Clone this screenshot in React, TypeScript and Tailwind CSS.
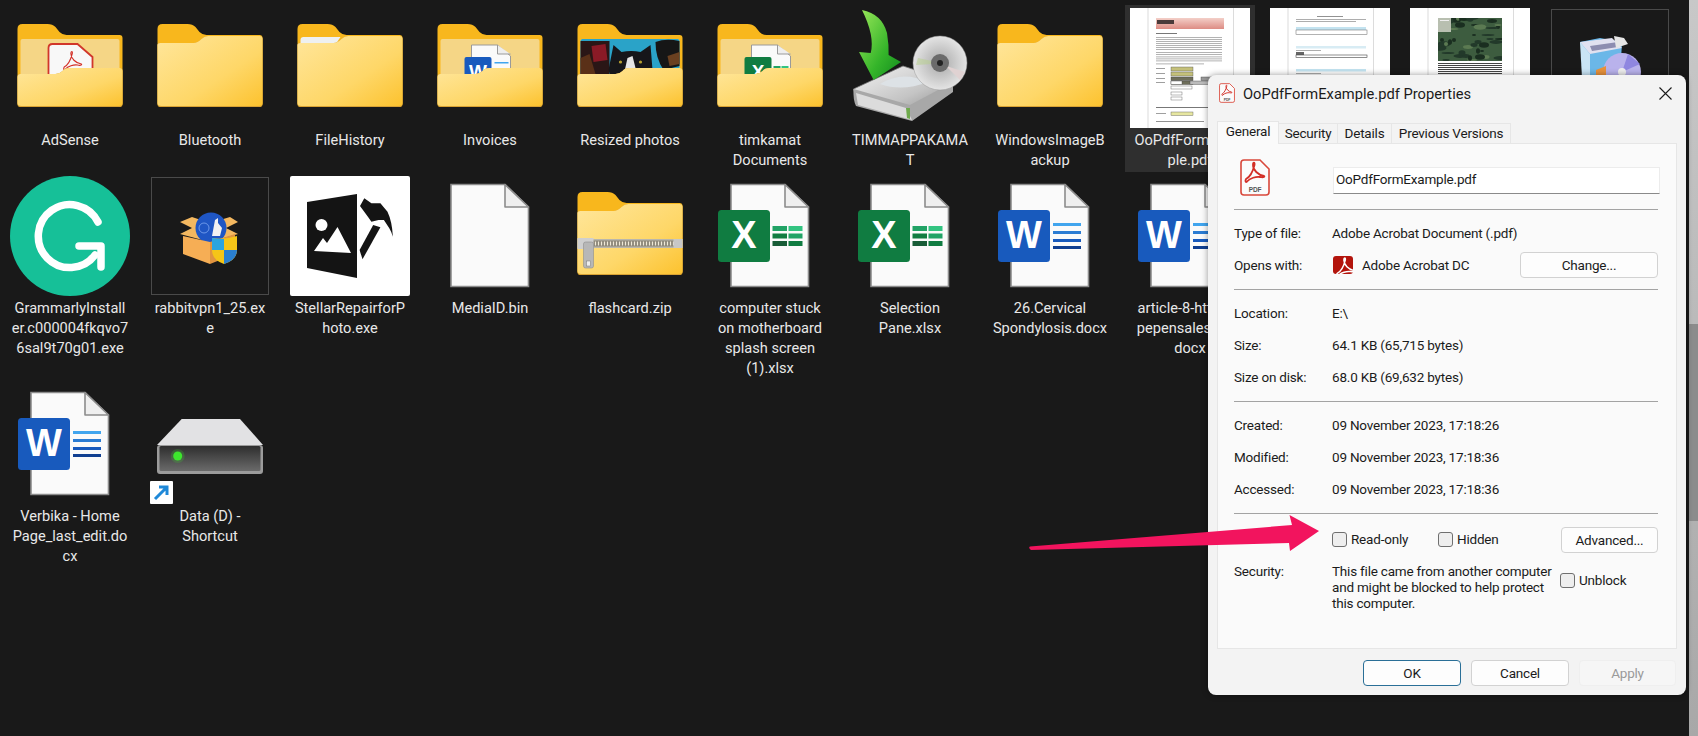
import React from "react";

const FONT = "font-['Roboto','Noto_Sans',sans-serif]";

const Line = ({ x, y, w, h = 1, c = "#555" }: { x: number; y: number; w: number; h?: number; c?: string }) => (
  <rect x={x} y={y} width={w} height={h} fill={c} />
);

const Defs = () => (
  <svg className="absolute w-0 h-0" aria-hidden="true">
    <defs>
      <linearGradient id="folderFront" x1="0" y1="0" x2="1" y2="1">
        <stop offset="0" stopColor="#ffe69b" />
        <stop offset="0.6" stopColor="#fed768" />
        <stop offset="1" stopColor="#fcc22e" />
      </linearGradient>
      <linearGradient id="driveFace" x1="0" y1="0" x2="0" y2="1">
        <stop offset="0" stopColor="#2e2e2e" />
        <stop offset="1" stopColor="#6a6a6a" />
      </linearGradient>
      <linearGradient id="arrowGreen" x1="0" y1="0" x2="1" y2="1">
        <stop offset="0" stopColor="#9be85a" />
        <stop offset="0.6" stopColor="#35b52a" />
        <stop offset="1" stopColor="#118a1d" />
      </linearGradient>
      <linearGradient id="hddSilver" x1="0" y1="0" x2="1" y2="1">
        <stop offset="0" stopColor="#f4f4f4" />
        <stop offset="0.6" stopColor="#c4c4c4" />
        <stop offset="1" stopColor="#8a8a8a" />
      </linearGradient>
      <radialGradient id="disc" cx="0.5" cy="0.5" r="0.5">
        <stop offset="0" stopColor="#888" />
        <stop offset="0.35" stopColor="#bdbdbd" />
        <stop offset="1" stopColor="#e4e4e4" />
      </radialGradient>
      <linearGradient id="thumbBand" x1="0" y1="0" x2="0" y2="1">
        <stop offset="0" stopColor="#f3cfc8" />
        <stop offset="1" stopColor="#dd8c84" />
      </linearGradient>
    </defs>
  </svg>
);

const Box = ({ children }: { children?: React.ReactNode }) => (
  <svg width="120" height="120" viewBox="0 0 120 120" className="block">
    {children}
  </svg>
);

const FolderBack = () => (
  <path d="M0 5Q0 0 5 0H30Q35 0 38 3L42 8Q45 11 49 11H102Q105 11 105 14V80Q105 83 102 83H3Q0 83 0 80Z" fill="#f8b71d" />
);
const FrontPlain = () => (
  <>
    <path d="M0 21Q0 19 3 19H36Q40 19 44 15Q47 12 51 12H102Q105 12 105 15V80Q105 83 101 83H4Q0 83 0 80Z" fill="#d9a233" />
    <path d="M0 21Q0 19 3 19H36Q40 19 44 15Q47 12 51 12H102Q105 12 105 15V79Q105 82 101 82H4Q0 82 0 79Z" fill="url(#folderFront)" />
  </>
);
const FrontOpen = () => (
  <>
    <path d="M0 53Q0 50 3 50H38Q42 50 45 47Q47 44 52 44H102Q105 44 105 47V80Q105 83 101 83H4Q0 83 0 80Z" fill="#d9a233" />
    <path d="M0 53Q0 50 3 50H38Q42 50 45 47Q47 44 52 44H102Q105 44 105 47V79Q105 82 101 82H4Q0 82 0 79Z" fill="url(#folderFront)" />
  </>
);

const Folder = ({ extra }: { extra?: React.ReactNode }) => (
  <Box>
    <g transform="translate(7.5 16)">
      <FolderBack />
      {extra}
      <FrontPlain />
    </g>
  </Box>
);

const OpenFolder = ({ inner }: { inner?: React.ReactNode }) => (
  <Box>
    <g transform="translate(7.5 16)">
      <FolderBack />
      <rect x="3" y="15" width="99" height="40" rx="2" fill="#f5d686" />
      {inner}
      <FrontOpen />
    </g>
  </Box>
);

const MiniPage = () => (
  <path d="M34 21H60L73 32V60H34Z" fill="#fafafa" stroke="#9a9a9a" strokeWidth="1" />
);

const FileBase = () => (
  <>
    <path d="M21 8.5H75L98.5 31V110.500H21Z" fill="#fafafa" stroke="#8c8c8c" strokeWidth="1.600" />
    <path d="M75 8.500V31H98.500Z" fill="#efefef" stroke="#8c8c8c" strokeWidth="1.600" strokeLinejoin="round" />
  </>
);

const Badge = ({ c, t }: { c: string; t: string }) => (
  <>
    <rect x="8" y="34" width="52" height="52" rx="3.500" fill={c} />
    <text x="34" y="72" textAnchor="middle" fontFamily="'Liberation Sans',sans-serif" fontWeight="700" fontSize="38" fill="#fff">
      {t}
    </text>
  </>
);

const WordIcon = () => (
  <Box>
    <FileBase />
    <Line x={63} y={47} w={28} h={3} c="#41a5ee" />
    <Line x={63} y={55} w={28} h={3} c="#2b7cd3" />
    <Line x={63} y={63} w={28} h={3} c="#185abd" />
    <Line x={63} y={70} w={28} h={3} c="#103f91" />
    <Badge c="#185abd" t="W" />
  </Box>
);

const ExcelIcon = () => (
  <Box>
    <FileBase />
    <Line x={62.500} y={50} w={14.500} h={5} c="#21a366" />
    <Line x={78.500} y={50} w={14} h={5} c="#33c481" />
    <Line x={62.500} y={57.500} w={14.500} h={5} c="#107c41" />
    <Line x={78.500} y={57.500} w={14} h={5} c="#21a366" />
    <Line x={62.500} y={65} w={14.500} h={5} c="#185c37" />
    <Line x={78.500} y={65} w={14} h={5} c="#107c41" />
    <Badge c="#107c41" t="X" />
  </Box>
);

const Swirl = ({ c = "#d32f27", w = 2 }: { c?: string; w?: number }) => (
  <path
    d="M6 22C10 20 13 14 14.500 8C15 5 13 5 13 8C13 13 18 18 24 19C25 19.500 24 21 20 20C16 19.500 10 21 7 24.500C5.500 26 5 24 6 22Z"
    fill="none"
    stroke={c}
    strokeWidth={w}
    strokeLinejoin="round"
  />
);

const PdfIcon = ({ className }: { className: string }) => (
  <svg viewBox="0 0 30 37" className={className}>
    <path d="M4 1H20L29 10V33Q29 36 26 36H4Q1 36 1 33V4Q1 1 4 1Z" fill="#fbfbfb" stroke="#d9483b" strokeWidth="1.600" />
    <g transform="translate(0 -2) scale(1)">
      <Swirl w={1.800} />
    </g>
    <text x="15" y="33" textAnchor="middle" fontFamily="'Liberation Sans',sans-serif" fontWeight="700" fontSize="6.500" fill="#555">
      PDF
    </text>
  </svg>
);

const AdSenseIcon = () => (
  <OpenFolder
    inner={
      <>
        <path d="M35 20H60L75 33V60H31V24Q31 20 35 20Z" fill="#f8f8f8" stroke="#d1372b" strokeWidth="1.800" />
        <g transform="translate(41 22) scale(0.950)">
          <Swirl w={1.200} />
        </g>
      </>
    }
  />
);

const InvoicesIcon = () => (
  <OpenFolder
    inner={
      <>
        <MiniPage />
        <path d="M60 21V30H73" fill="#eee" stroke="#9a9a9a" />
        <rect x="27" y="33" width="27" height="27" rx="2" fill="#185abd" />
        <text x="40.500" y="54" textAnchor="middle" fontFamily="'Liberation Sans',sans-serif" fontWeight="700" fontSize="19" fill="#fff">
          W
        </text>
        <Line x={57} y={38} w={14} h={1.500} c="#41a5ee" />
      </>
    }
  />
);

const TimkamatIcon = () => (
  <OpenFolder
    inner={
      <>
        <MiniPage />
        <path d="M60 21V30H73" fill="#eee" stroke="#9a9a9a" />
        <rect x="27" y="33" width="27" height="27" rx="2" fill="#107c41" />
        <text x="40.500" y="54" textAnchor="middle" fontFamily="'Liberation Sans',sans-serif" fontWeight="700" fontSize="19" fill="#fff">
          X
        </text>
        <Line x={56} y={42} w={7} h={3} c="#21a366" />
        <Line x={64} y={42} w={7} h={3} c="#33c481" />
      </>
    }
  />
);

const PhotoIcon = () => (
  <OpenFolder
    inner={
      <>
        <rect x="3" y="15" width="99" height="40" rx="2" fill="#2aa3c8" />
        <path d="M3 17H32V55H3Z" fill="#2a1616" />
        <path d="M14 22L28 20L30 36L16 38Z" fill="#8a1a26" />
        <path d="M3 34L12 30L18 50H3Z" fill="#5a3018" />
        <path d="M78 18Q88 14 102 17V42L86 46Q78 34 78 18Z" fill="#161616" />
        <path d="M90 32L102 28V40L92 42Z" fill="#6a4020" />
        <path d="M31 46L36 21L44 28Q54 26 63 28L73 21L75 46L70 55H34Z" fill="#16161a" />
        <path d="M50 34L55 32L60 52H46Z" fill="#e6e6e6" />
        <circle cx="43" cy="38" r="1.600" fill="#b8a030" />
        <circle cx="63" cy="38" r="1.600" fill="#b8a030" />
      </>
    }
  />
);

const ZipIcon = () => (
  <Box>
    <g transform="translate(7.500 16)">
      <FolderBack />
      <FrontPlain />
      <rect x="0" y="47" width="105" height="9" fill="#b9b6ac" />
      <rect x="14" y="48.500" width="90" height="6" fill="#8a8578" />
      <path
        d="M15 49.500V53.500M18 49.500V53.500M21 49.500V53.500M24 49.500V53.500M27 49.500V53.500M30 49.500V53.500M33 49.500V53.500M36 49.500V53.500M39 49.500V53.500M42 49.500V53.500M45 49.500V53.500M48 49.500V53.500M51 49.500V53.500M54 49.500V53.500M57 49.500V53.500M60 49.500V53.500M63 49.500V53.500M66 49.500V53.500M69 49.500V53.500M72 49.500V53.500M75 49.500V53.500M78 49.500V53.500M81 49.500V53.500M84 49.500V53.500M87 49.500V53.500M90 49.500V53.500M93 49.500V53.500M96 49.500V53.500"
        stroke="#f0ead8"
        strokeWidth="1.200"
      />
      <rect x="96" y="47" width="9" height="9" fill="#c7c7c7" />
      <rect x="0" y="46" width="16" height="11" fill="#cfcfcf" />
      <rect x="6" y="50" width="10" height="26" rx="2" fill="#b7b7b7" stroke="#8f8f8f" strokeWidth="0.600" />
      <rect x="9" y="69" width="4" height="5" fill="#eee" stroke="#777" strokeWidth="0.500" />
    </g>
  </Box>
);

const GrammarlyIcon = () => (
  <Box>
    <circle cx="60" cy="60" r="60" fill="#16c098" />
    <g fill="none" stroke="#fff" strokeWidth="7.500" strokeLinecap="round" strokeLinejoin="round">
      <path d="M88 46A31.500 31.500 0 1 0 85 79" />
      <path d="M69 70H91V91" />
    </g>
  </Box>
);

const RabbitIcon = () => (
  <Box>
    <rect x="1.500" y="1.500" width="117" height="117" fill="#191919" stroke="#4a4a4a" strokeWidth="1" />
    <path d="M30 46L42 41L60 47L80 41L88 46L76 52L88 58L60 66L30 58L42 52Z" fill="#f4b860" />
    <circle cx="61" cy="52" r="15.500" fill="#1f56c4" />
    <path d="M62 60L65 44L68 42L68 47L72 52L70 60Z" fill="#f2f2f2" />
    <circle cx="54" cy="52" r="5" fill="none" stroke="#7ea6f0" strokeWidth="0.800" />
    <path d="M33 60L60 66V88L33 78Z" fill="#f6ae55" />
    <path d="M60 66L85 58V78L60 88Z" fill="#e09440" />
    <path d="M62 62Q74 64 87 60V74Q87 84 74 88Q62 84 62 74Z" fill="#f5c518" />
    <path d="M62 62Q68 63 74 63V74H62Z" fill="#2aa4e0" />
    <path d="M74 74H87Q87 84 74 88Z" fill="#2a7fd0" />
  </Box>
);

const StellarIcon = () => (
  <Box>
    <rect width="120" height="120" rx="2" fill="#fff" />
    <path d="M17 26L67 18V102L17 92Z" fill="#141414" />
    <circle cx="31.500" cy="49" r="6" fill="#fff" />
    <path d="M24 75L33 62L37 67L47.500 51L61 77Z" fill="#fff" />
    <path d="M83.200 49L90.400 51.300L72.500 83.300L69.600 74Z" fill="#141414" />
    <path d="M70 30L74.300 22.300L81.400 27.300H90.400L97.500 35.700Q102 45 102.900 60.700Q101 55 99.300 52.300L93.900 44H88.600L81.400 45.700L77.900 40.700Z" fill="#141414" />
  </Box>
);

const DiscIcon = () => (
  <Box>
    <path d="M3.500 81L53 58L103 74L62 104L6 91Z" fill="url(#hddSilver)" stroke="#777" strokeWidth="0.800" />
    <path d="M3.500 81L60 97L103 74V84L62 113L6 98Q3 92 3.500 81Z" fill="#a8a8a8" />
    <path d="M6 85L56 100L62 112L8 97Z" fill="#dcdcdc" />
    <path d="M56 100L60 100V111L57 110Z" fill="#6faa4d" />
    <path d="M30 76Q52 62 78 74Q52 84 30 76Z" fill="#dde2e6" />
    <circle cx="90" cy="55" r="27" fill="url(#disc)" stroke="#9a9a9a" strokeWidth="0.500" />
    <path d="M68 50L82 53L82 56L66 57Z" fill="#b6d08a" opacity="0.500" />
    <path d="M96 58L115 64L110 72Z" fill="#e0d2d2" />
    <circle cx="90" cy="55" r="9" fill="#6b6b6b" />
    <circle cx="90" cy="55" r="3" fill="#222" />
    <path d="M12 2Q32 6 37 25Q39 37 38.600 47L51 54L23.600 72L9 44L20.700 45Q25 28 12 2Z" fill="url(#arrowGreen)" />
  </Box>
);

const DriveShortcut = () => (
  <Box>
    <path d="M31.700 35H90L113 61H7Z" fill="#e2e2e4" />
    <rect x="7" y="61" width="106" height="29" rx="3" fill="#9b9b9b" />
    <rect x="9.500" y="62" width="101" height="25" rx="1.500" fill="url(#driveFace)" />
    <circle cx="27.700" cy="72" r="4.500" fill="#3ee62e" />
    <circle cx="27.700" cy="72" r="7" fill="#3ee62e" opacity="0.200" />
    <rect x="0" y="97" width="23" height="23" rx="1" fill="#fff" />
    <path d="M5 115L16 104M9 103H17V111" fill="none" stroke="#1e88d8" strokeWidth="3" />
  </Box>
);

const ThumbPage = ({ children }: { children: React.ReactNode }) => (
  <Box>
    <rect width="120" height="120" fill="#fff" />
    <Line x={17.500} y={0} w={1} h={120} c="#dcdcdc" />
    <Line x={103} y={0} w={1} h={120} c="#dcdcdc" />
    {children}
  </Box>
);

const Thumb1 = () => (
  <ThumbPage>
    <rect x="26" y="10" width="68" height="11" fill="url(#thumbBand)" />
    <Line x={27} y={12} w={17} h={4} c="#4a3a3a" />
    <Line x={26} y={25} w={21} h={1} c="#777" />
    {[29, 31, 33, 35, 37, 39, 41].map((y) => (
      <Line key={y} x={26} y={y} w={66} h={0.800} c="#a0a0a0" />
    ))}
    {[44, 46, 48.500, 50.500, 52.500, 55.500].map((y) => (
      <Line key={y} x={26} y={y} w={y === 55.500 ? 48 : 66} h={0.800} c="#a0a0a0" />
    ))}
    {[59, 64].map((y) => (
      <React.Fragment key={y}>
        <Line x={26} y={y + 1} w={9} h={0.800} c="#888" />
        <rect x="41" y={y} width="22" height="4" fill="#c4c07a" stroke="#555" strokeWidth="0.400" />
      </React.Fragment>
    ))}
    {[69, 73].map((y) => (
      <React.Fragment key={y}>
        <Line x={26} y={y + 1} w={9} h={0.800} c="#888" />
        <rect x="41" y={y} width="22" height="3.500" fill="#6e6e5a" stroke="#444" strokeWidth="0.400" />
      </React.Fragment>
    ))}
    <rect x="71" y="69" width="11" height="3.500" fill="#999" stroke="#444" strokeWidth="0.400" />
    <rect x="41" y="73" width="11" height="3.500" fill="#fff" stroke="#444" strokeWidth="0.400" />
    <rect x="60" y="73" width="30" height="3.500" fill="#bbb" stroke="#444" strokeWidth="0.400" />
    <rect x="41" y="78" width="21" height="3" fill="#fff" stroke="#555" strokeWidth="0.400" />
    <rect x="41" y="84" width="11" height="3" fill="#fff" stroke="#555" strokeWidth="0.400" />
    <rect x="41" y="89" width="11" height="3" fill="#fff" stroke="#555" strokeWidth="0.400" />
    <Line x={26} y={99} w={66} h={1} c="#777" />
    <rect x="41" y="104" width="22" height="3.500" fill="#e6e6a0" stroke="#555" strokeWidth="0.400" />
    <Line x={26} y={105} w={10} h={0.800} c="#888" />
    <Line x={26} y={113} w={48} h={0.800} c="#777" />
  </ThumbPage>
);

const Thumb2 = () => (
  <ThumbPage>
    <Line x={47} y={8} w={26} h={0.800} c="#777" />
    <Line x={26} y={11} w={70} h={0.800} c="#999" />
    <Line x={26} y={13} w={60} h={0.800} c="#999" />
    <Line x={26} y={19} w={70} h={3} c="#c3e3f0" />
    <rect x="26" y="22" width="71" height="4.500" fill="#fff" stroke="#666" strokeWidth="0.500" />
    <Line x={26} y={38} w={70} h={2.500} c="#d8ecf4" />
    <Line x={26} y={42} w={25} h={0.800} c="#999" />
    <rect x="26" y="44" width="8" height="3" fill="#666" />
    <rect x="26" y="47" width="71" height="2.500" fill="#fff" stroke="#444" strokeWidth="0.600" />
    <Line x={26} y={61} w={70} h={2.500} c="#c3e3f0" />
    <Line x={26} y={65} w={25} h={0.800} c="#999" />
  </ThumbPage>
);

const mapSpots = Array.from({ length: 46 }, (_, i) => ({
  x: 28 + ((i * 37 + i * i * 3) % 64),
  y: 10 + ((i * 23 + i * i) % 43),
  rx: 2 + (i % 4) * 1.500,
  ry: 1 + (i % 3) * 0.900,
  c: i % 5 === 0 ? "#5b7a52" : i % 2 === 0 ? "#1a2e20" : "#22392a",
}));

const Thumb3 = () => (
  <ThumbPage>
    <svg x="28" y="10" width="64" height="43" viewBox="28 10 64 43">
      <rect x="28" y="10" width="64" height="43" fill="#3d5c3f" />
      {mapSpots.map((s, i) => (
        <ellipse key={i} cx={s.x} cy={s.y} rx={s.rx} ry={s.ry} fill={s.c} />
      ))}
      <rect x="28" y="10" width="13" height="14" fill="#b8bfb0" />
      <Line x={30} y={12} w={9} h={1} c="#eee" />
    </svg>
    {[55, 57, 59, 61, 63, 65].map((y) => (
      <Line key={y} x={28} y={y} w={64} h={1} c="#444" />
    ))}
  </ThumbPage>
);

const Thumb4 = () => (
  <Box>
    <rect x="1.500" y="1.500" width="117" height="117" fill="#191919" stroke="#4a4a4a" strokeWidth="1" />
    <path d="M30 34L50 30L72 34L70 70L38 74Z" fill="#6bb7e8" />
    <path d="M30 34L62 30L72 40L40 46Z" fill="#e1e1f0" />
    <path d="M40 38L68 34L68 39L42 43Z" fill="#8d8db0" />
    <path d="M30 34L40 46L40 76L32 70Z" fill="#c9e4f5" />
    <path d="M64 28L74 30L78 36L66 40Z" fill="#e6e6e6" />
    <circle cx="72" cy="64" r="19" fill="#b9b2ec" />
    <path d="M72 64L78 46L90 56Z" fill="#8f86e0" />
    <path d="M46 62L56 58L56 72L46 76Z" fill="#e8923c" />
    <circle cx="72" cy="64" r="4" fill="#eee" />
  </Box>
);

type Item = { icon: React.ReactNode; lines: string[]; selected?: boolean };

const items: Item[] = [
  { icon: <AdSenseIcon />, lines: ["AdSense"] },
  { icon: <Folder />, lines: ["Bluetooth"] },
  { icon: <Folder extra={<path d="M3 16Q3 13 6 13H43L39 19H3Z" fill="#eef0f0" />} />, lines: ["FileHistory"] },
  { icon: <InvoicesIcon />, lines: ["Invoices"] },
  { icon: <PhotoIcon />, lines: ["Resized photos"] },
  { icon: <TimkamatIcon />, lines: ["timkamat", "Documents"] },
  { icon: <DiscIcon />, lines: ["TIMMAPPAKAMA", "T"] },
  { icon: <Folder />, lines: ["WindowsImageB", "ackup"] },
  { icon: <Thumb1 />, lines: ["OoPdfFormExam", "ple.pdf"], selected: true },
  { icon: <Thumb2 />, lines: [] },
  { icon: <Thumb3 />, lines: [] },
  { icon: <Thumb4 />, lines: [] },
  { icon: <GrammarlyIcon />, lines: ["GrammarlyInstall", "er.c000004fkqvo7", "6sal9t70g01.exe"] },
  { icon: <RabbitIcon />, lines: ["rabbitvpn1_25.ex", "e"] },
  { icon: <StellarIcon />, lines: ["StellarRepairforP", "hoto.exe"] },
  { icon: <Box><FileBase /></Box>, lines: ["MediaID.bin"] },
  { icon: <ZipIcon />, lines: ["flashcard.zip"] },
  { icon: <ExcelIcon />, lines: ["computer stuck", "on motherboard", "splash screen", "(1).xlsx"] },
  { icon: <ExcelIcon />, lines: ["Selection", "Pane.xlsx"] },
  { icon: <WordIcon />, lines: ["26.Cervical", "Spondylosis.docx"] },
  { icon: <WordIcon />, lines: ["article-8-https-w", "pepensalespage", "docx"] },
  { icon: <span />, lines: [] },
  { icon: <span />, lines: [] },
  { icon: <span />, lines: [] },
  { icon: <WordIcon />, lines: ["Verbika - Home", "Page_last_edit.do", "cx"] },
  { icon: <DriveShortcut />, lines: ["Data (D) -", "Shortcut"] },
];

const DesktopItem = ({ item }: { item: Item }) => (
  <div
    className={
      item.selected
        ? "mx-[5px] -mt-[3px] pt-[3px] pb-[2px] -mb-[2px] bg-[#2f2f2f] flex flex-col items-center"
        : "flex flex-col items-center"
    }
  >
    <div className="w-[120px] h-[120px]">{item.icon}</div>
    <div className="mt-[2px]">
      {item.lines.map((l) => (
        <div key={l} className="h-5 leading-5 text-center whitespace-nowrap text-[14.6px] text-[#e8e8e8]">
          {l}
        </div>
      ))}
    </div>
  </div>
);

const Section = ({ children }: { children: React.ReactNode }) => (
  <div className="ml-[16px] mr-[18px] border-t border-[#a3a3a3] pt-[7px] pb-[8px]">{children}</div>
);

const Row = ({ label, children }: { label: string; children: React.ReactNode }) => (
  <div className="flex items-center h-8">
    <div className="w-[98px] shrink-0">{label}</div>
    {children}
  </div>
);

const Check = ({ label, className }: { label: string; className?: string }) => (
  <div className={`flex items-center ${className ?? ""}`}>
    <span className="w-[15px] h-[15px] rounded-[3px] border border-[#6f6f6f] bg-[#eeeeee] mr-[4px]" />
    <span>{label}</span>
  </div>
);

const Btn = ({ children, className }: { children: React.ReactNode; className: string }) => (
  <div className={`flex items-center justify-center rounded-[4px] border h-[26px] ${className}`}>{children}</div>
);

const Dialog = () => (
  <div className="absolute left-[1208px] top-[75px] w-[478px] h-[620px] bg-[#f3f3f3] rounded-[8px] shadow-[0_0_6px_rgba(0,0,0,0.4)] text-[13.5px] tracking-[-0.2px] text-[#1b1b1b] flex flex-col">
    <div className="h-[46px] flex items-center pl-[11px] pr-[14px] pb-[10px] shrink-0">
      <PdfIcon className="w-[16px] h-[20px]" />
      <span className="ml-[8px] mt-[2px] text-[14.7px] tracking-normal">OoPdfFormExample.pdf Properties</span>
      <svg viewBox="0 0 13 13" className="w-[13px] h-[13px] ml-auto" fill="none" stroke="#1b1b1b" strokeWidth="1.100">
        <path d="M0.500 0.500L12.500 12.500M12.500 0.500L0.500 12.500" />
      </svg>
    </div>
    <div className="flex items-end h-[23px] mx-[9px] shrink-0 relative z-10">
      <div className="w-[62px] h-[23px] bg-[#fafafa] border border-b-0 border-[#e6e6e6] flex items-center justify-center pb-[3px]">General</div>
      <div className="w-[59px] h-[21px] border border-l-0 border-[#e6e6e6] flex items-center justify-center">Security</div>
      <div className="w-[54px] h-[21px] border border-l-0 border-[#e6e6e6] flex items-center justify-center">Details</div>
      <div className="w-[119px] h-[21px] border border-l-0 border-[#e6e6e6] flex items-center justify-center">Previous Versions</div>
    </div>
    <div className="mx-[9px] h-[506px] -mt-px bg-[#fafafa] border border-[#e6e6e6] shrink-0">
      <div className="flex h-[65px] pl-[22px] pt-[15px]">
        <PdfIcon className="w-[30px] h-[37px]" />
        <div className="ml-[63px] mt-[8px] w-[327px] h-[27px] bg-white border border-[#ececec] border-b-[#8a8a8a] pl-[2px] leading-[22px]">
          OoPdfFormExample.pdf
        </div>
      </div>
      <Section>
        <Row label="Type of file:">
          <span>Adobe Acrobat Document (.pdf)</span>
        </Row>
        <Row label="Opens with:">
          <svg viewBox="0 0 20 18" className="w-[20px] h-[18px] ml-px">
            <rect width="20" height="18" rx="3" fill="#b3140c" />
            <g transform="translate(-1.500 -3.500) scale(0.950)">
              <Swirl c="#fff" w={1.600} />
            </g>
          </svg>
          <span className="ml-[9px]">Adobe Acrobat DC</span>
          <Btn className="ml-auto w-[138px] bg-[#fdfdfd] border-[#d2d2d2]">Change...</Btn>
        </Row>
      </Section>
      <Section>
        <Row label="Location:"><span>E:\</span></Row>
        <Row label="Size:"><span>64.1 KB (65,715 bytes)</span></Row>
        <Row label="Size on disk:"><span>68.0 KB (69,632 bytes)</span></Row>
      </Section>
      <Section>
        <Row label="Created:"><span>09 November 2023, 17:18:26</span></Row>
        <Row label="Modified:"><span>09 November 2023, 17:18:36</span></Row>
        <Row label="Accessed:"><span>09 November 2023, 17:18:36</span></Row>
      </Section>
      <div className="ml-[16px] mr-[18px] border-t border-[#a3a3a3] pt-[13px]">
        <div className="flex items-center h-[26px] pl-[98px]">
          <Check label="Read-only" className="w-[106px] -mt-[2px]" />
          <Check label="Hidden" className="-mt-[2px]" />
          <Btn className="ml-auto w-[97px] bg-[#fdfdfd] border-[#d2d2d2]">Advanced...</Btn>
        </div>
        <div className="flex mt-[10px]">
          <div className="w-[98px] shrink-0 leading-[16px]">Security:</div>
          <div className="w-[228px] shrink-0 leading-[16px] whitespace-nowrap">
            <div>This file came from another computer</div>
            <div>and might be blocked to help protect</div>
            <div>this computer.</div>
          </div>
          <Check label="Unblock" className="h-[15px] mt-[10px]" />
        </div>
      </div>
    </div>
    <div className="flex justify-end gap-[10px] mt-[11px] pr-[10px]">
      <Btn className="w-[98px] bg-[#fdfdfd] border-[#2a6f97]">OK</Btn>
      <Btn className="w-[98px] bg-[#fdfdfd] border-[#d2d2d2]">Cancel</Btn>
      <Btn className="w-[97px] bg-[#f6f6f6] border-[#efefef] text-[#9a9a9a]">Apply</Btn>
    </div>
  </div>
);

const PinkArrow = () => (
  <svg className="absolute left-[1020px] top-[505px] w-[310px] h-[55px]" viewBox="1020 505 310 55">
    <path d="M1030 546.500L1292 525L1289.500 515L1319 531L1290 551L1289 543L1031 550Q1028 548 1030 546.500Z" fill="#f2145e" />
  </svg>
);

export default function App() {
  return (
    <div className={`relative flex w-[1698px] h-[736px] overflow-hidden bg-[#191919] ${FONT}`}>
      <Defs />
      <div className="flex-1 pt-2 grid grid-cols-[repeat(12,140px)] content-start gap-y-[6px]">
        {items.map((it, i) => (
          <DesktopItem key={i} item={it} />
        ))}
      </div>
      <div className="w-[9px] h-full flex flex-col bg-linear-to-b from-[#c8c8c8] to-[#a8a8a8]">
        <div className="mt-[324px] h-[197px] bg-[#8c8c8c]" />
      </div>
      <Dialog />
      <PinkArrow />
    </div>
  );
}
